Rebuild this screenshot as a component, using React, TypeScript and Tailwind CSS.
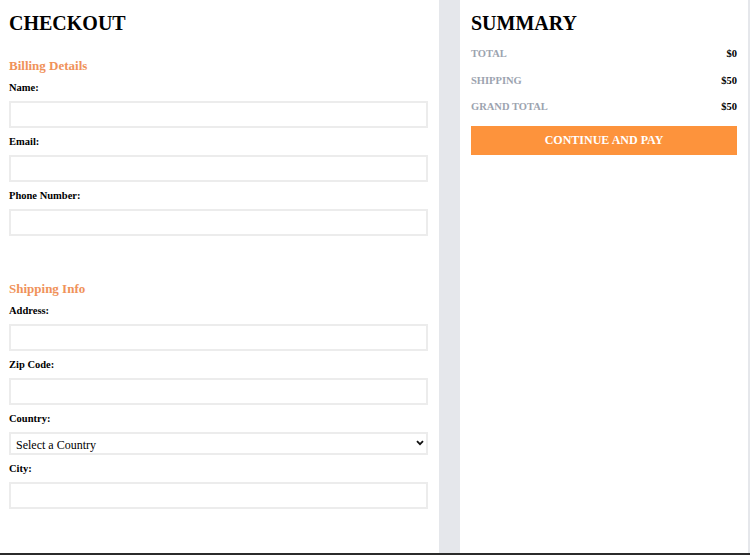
function Field({ label }: { label: string }) {
    return (
        <div className="flex flex-col">
            <label className="text-[10.5px] font-bold text-black leading-[14px] h-[14px]">
                {label}
            </label>
            <input
                type="text"
                className="mt-[6px] h-[27px] w-full border-2 border-[#ececec] bg-white outline-none"
            />
        </div>
    );
}

function Row({ name, value }: { name: string; value: string }) {
    return (
        <div className="flex justify-between items-center h-[26.5px] text-[10.5px] font-bold">
            <span className="text-[#9ca3af] uppercase">{name}</span>
            <span className="text-black">{value}</span>
        </div>
    );
}

function App() {
    return (
        <div
            className="flex flex-col w-[750px] h-[555px] bg-[#e5e7eb] overflow-hidden"
            style={{ fontFamily: '"Liberation Serif", "Times New Roman", serif' }}
        >
            <div className="flex flex-1 gap-[21px] pr-[2px]">
                {/* checkout form */}
                <div className="w-[439px] bg-white pl-[9px] pr-[11px] pt-[11px]">
                    <h1 className="text-[20px] font-bold text-black leading-[24px]">
                        CHECKOUT
                    </h1>
                    <h2 className="mt-[23px] text-[13px] font-bold text-[#f0925a] leading-[16px]">
                        Billing Details
                    </h2>
                    <div className="mt-[7px] flex flex-col gap-[7px]">
                        <Field label="Name:" />
                        <Field label="Email:" />
                        <Field label="Phone Number:" />
                    </div>

                    <h2 className="mt-[45px] text-[13px] font-bold text-[#f0925a] leading-[16px]">
                        Shipping Info
                    </h2>
                    <div className="mt-[7px] flex flex-col gap-[7px]">
                        <Field label="Address:" />
                        <Field label="Zip Code:" />
                        <div className="flex flex-col">
                            <label className="text-[10.5px] font-bold text-black leading-[14px] h-[14px]">
                                Country:
                            </label>
                            <div className="relative mt-[6px] flex h-[23px]">
                                <select className="block appearance-none h-[23px] w-full border-2 border-[#ececec] bg-white pl-[5px] pt-[3px] text-[12px] leading-[16px] text-black outline-none">
                                    <option>Select a Country</option>
                                </select>
                                <svg
                                    className="absolute right-[4px] top-[8px] pointer-events-none"
                                    width="8"
                                    height="6"
                                    viewBox="0 0 8 6"
                                >
                                    <path d="M1 1.2 L4 4.2 L7 1.2" fill="none" stroke="#111" strokeWidth="1.8" />
                                </svg>
                            </div>
                        </div>
                        <Field label="City:" />
                    </div>
                </div>

                {/* order summary */}
                <div className="flex-1 bg-white px-[11px] pt-[11px]">
                    <h1 className="text-[20px] font-bold text-black leading-[24px]">
                        SUMMARY
                    </h1>
                    <div className="mt-[6px] flex flex-col">
                        <Row name="Total" value="$0" />
                        <Row name="Shipping" value="$50" />
                        <Row name="Grand Total" value="$50" />
                    </div>
                    <button className="mt-[5px] w-full h-[29px] bg-[#fd933c] text-white text-[12px] font-bold">
                        CONTINUE AND PAY
                    </button>
                </div>
            </div>
            <div className="h-[2px] bg-[#2b2b2b]" />
        </div>
    );
}

export default App;
